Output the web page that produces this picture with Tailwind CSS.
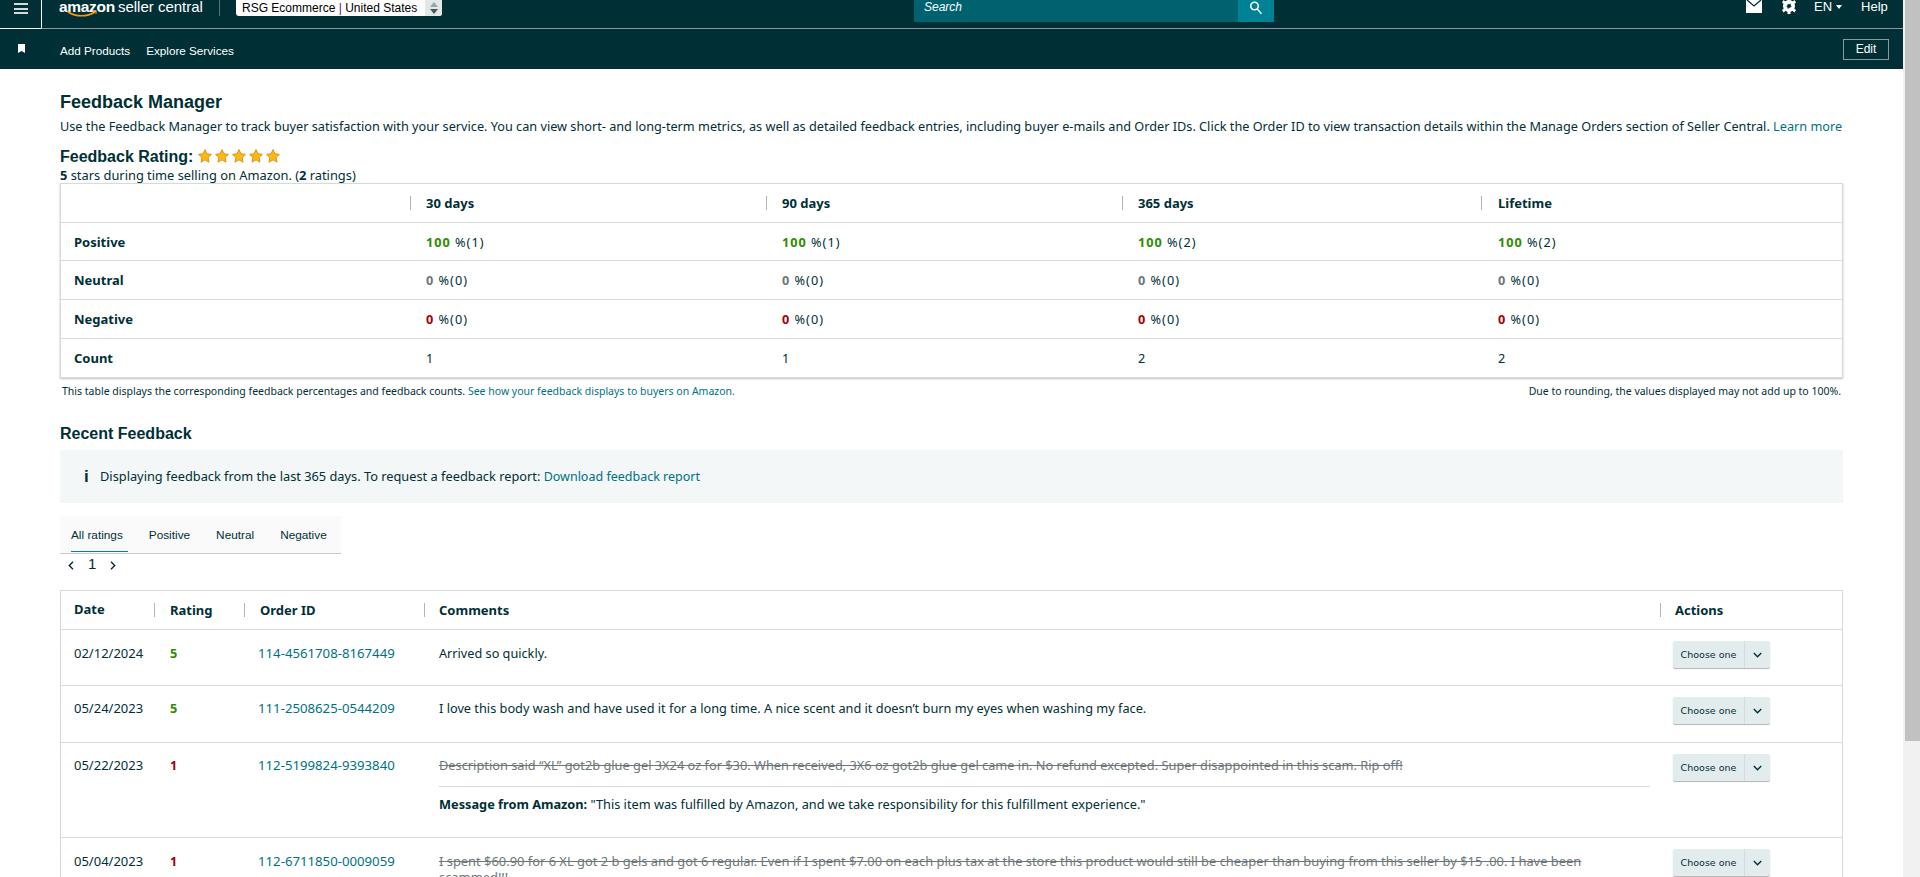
<!DOCTYPE html>
<html lang="en">
<head>
    <meta charset="UTF-8">
    <title>Feedback Manager</title>
    <script src="https://cdn.jsdelivr.net/npm/@tailwindcss/browser@4"></script>
</head>
<body class="bg-white">
<div class="flex h-[877px] overflow-hidden font-['Noto_Sans',sans-serif] text-[12.7px] text-[#002f36]">
    <div class="w-[1903px] shrink-0">

        <!-- Top bar -->
        <div class="flex h-[29px] items-start border-b border-[#8a9a9c] bg-[#002f36] font-['Liberation_Sans',sans-serif] text-white">
            <div class="flex h-[29px] w-[42px] flex-col items-center gap-[2.5px] rounded-br-[2px] border-r border-b border-white pt-[3px]">
                <div class="h-[2px] w-[14px] bg-[#d5dbdb]"></div>
                <div class="h-[2px] w-[14px] bg-[#d5dbdb]"></div>
                <div class="h-[2px] w-[14px] bg-[#d5dbdb]"></div>
            </div>
            <div class="relative ml-[17px] flex w-[160px] items-baseline gap-[3px] leading-[13px]">
                <span class="text-[15.5px] font-bold tracking-[-0.3px]">amazon</span>
                <span class="text-[15px]">seller central</span>
                <svg class="absolute left-[8px] top-[11px]" width="30" height="6" viewBox="0 0 30 6" fill="none"><path d="M1 1c8 5 19 5 27 0" stroke="#f90" stroke-width="1.5"/><path d="M25 0h4v3" stroke="#f90" stroke-width="1"/></svg>
            </div>
            <div class="h-[16px] w-px bg-[#5f7376]"></div>
            <div class="ml-[16px] flex h-[16px] w-[206px] items-center justify-between rounded-b-[3px] bg-white pl-[6px] text-[12px] text-black">
                <span class="-mt-[1px] whitespace-nowrap"><span class="font-medium">RSG Ecommerce</span> <span class="text-[#5b0f8a]">|</span> United States</span>
                <div class="flex h-full w-[17px] flex-col items-center justify-center gap-[2px] rounded-br-[3px] bg-[#e4e7e7]">
                    <div class="h-0 w-0 border-x-[4px] border-b-[5px] border-x-transparent border-b-[#9aa5a6]"></div>
                    <div class="h-0 w-0 border-x-[4px] border-t-[5px] border-x-transparent border-t-[#4a5a5c]"></div>
                </div>
            </div>
            <div class="ml-[472px] flex h-[22px] w-[360px] justify-between bg-[#00626f]">
                <span class="pl-[10px] text-[12px] italic leading-[14px]">Search</span>
                <div class="flex w-[36px] justify-center bg-[#008296] pt-[1px]">
                    <svg width="14" height="14" viewBox="0 0 14 14" fill="none" stroke="white" stroke-width="1.5"><circle cx="5.5" cy="5" r="3.8"/><path d="M8.3 8l4.2 4.7"/></svg>
                </div>
            </div>
            <div class="ml-[472px] flex h-[14px] w-[16px]">
                <svg width="16" height="13" viewBox="0 0 16 13"><path d="M0 0h16v13H0z" fill="white"/><path d="M1 0l7 6 7-6" fill="none" stroke="#002f36" stroke-width="1.3"/></svg>
            </div>
            <svg class="ml-[19px]" width="16" height="14" viewBox="0 0 16 14"><circle cx="8" cy="6" r="4.5" fill="none" stroke="white" stroke-width="3"/><path d="M6.5 -1h3v15h-3zM1 2.5l1.5-2.500 12.500 10-1.500 2.500zM15 2.500l-1.500-2.500-12.500 10 1.500 2.500z" fill="white"/><circle cx="8" cy="6" r="2" fill="#002f36"/></svg>
            <span class="ml-[17px] text-[13px] leading-[13px]">EN</span>
            <div class="ml-[4px] mt-[5px] h-0 w-0 border-x-[3.5px] border-t-[4px] border-x-transparent border-t-white"></div>
            <span class="ml-[19px] text-[13px] leading-[13px]">Help</span>
        </div>

        <!-- Second bar -->
        <div class="flex h-[40px] items-center bg-[#002f36] font-['Liberation_Sans',sans-serif] text-[11.7px] text-white">
            <svg class="ml-[18px] mb-[2px]" width="7" height="9" viewBox="0 0 7 9"><path d="M0 0h7v9L3.500 7 0 9z" fill="white"/></svg>
            <span class="ml-[35px] mt-[3px]">Add Products</span>
            <span class="ml-[16px] mt-[3px]">Explore Services</span>
            <div class="ml-auto mr-[14px] flex h-[21px] w-[46px] items-center justify-center border border-[#8a9a9c] text-[12px]">Edit</div>
        </div>

        <!-- Feedback summary -->
        <div class="w-[1783px] ml-[60px]">
            <h1 class="mt-[21px] font-['Liberation_Sans',sans-serif] text-[18px] font-bold leading-[24px]">Feedback Manager</h1>
            <p class="mt-[3px] whitespace-nowrap leading-[18px]">Use the Feedback Manager to track buyer satisfaction with your service. You can view short- and long-term metrics, as well as detailed feedback entries, including buyer e-mails and Order IDs. Click the Order ID to view transaction details within the Manage Orders section of Seller Central. <span class="text-[#007185]">Learn more</span></p>
            <div class="mt-[12px] flex h-[20px] items-center">
                <h2 class="font-['Liberation_Sans',sans-serif] text-[16px] font-bold">Feedback Rating:</h2>
                <div class="ml-[5px] mb-[3px] flex gap-[3px]">
                    <svg width="14" height="14" viewBox="0 0 24 24"><path d="M12 1l3.400 7.300 7.600.9-5.600 5.400 1.500 8L12 18.600 5.100 22.600l1.500-8L1 9.200l7.600-.9z" fill="#fdb913" stroke="#d98a0b" stroke-width="1.500"/></svg>
                    <svg width="14" height="14" viewBox="0 0 24 24"><path d="M12 1l3.400 7.300 7.600.9-5.600 5.400 1.500 8L12 18.600 5.100 22.600l1.500-8L1 9.200l7.600-.9z" fill="#fdb913" stroke="#d98a0b" stroke-width="1.500"/></svg>
                    <svg width="14" height="14" viewBox="0 0 24 24"><path d="M12 1l3.400 7.300 7.600.9-5.600 5.400 1.500 8L12 18.600 5.100 22.600l1.500-8L1 9.200l7.600-.9z" fill="#fdb913" stroke="#d98a0b" stroke-width="1.500"/></svg>
                    <svg width="14" height="14" viewBox="0 0 24 24"><path d="M12 1l3.400 7.300 7.600.9-5.600 5.400 1.500 8L12 18.600 5.100 22.600l1.500-8L1 9.200l7.600-.9z" fill="#fdb913" stroke="#d98a0b" stroke-width="1.500"/></svg>
                    <svg width="14" height="14" viewBox="0 0 24 24"><path d="M12 1l3.400 7.300 7.600.9-5.600 5.400 1.500 8L12 18.600 5.100 22.600l1.500-8L1 9.200l7.600-.9z" fill="#fdb913" stroke="#d98a0b" stroke-width="1.500"/></svg>
                </div>
            </div>
            <p class="text-[12.85px] leading-[16px]"><b>5</b> stars during time selling on Amazon. (<b>2</b> ratings)</p>

            <!-- Metrics table -->
            <div class="border border-[#d5dbdb] shadow-[0_1px_2px_rgba(0,0,0,0.25)]">
                <div class="grid h-[39px] grid-cols-[349px_356px_356px_359px_1fr] items-center border-b border-[#d5dbdb] text-[13px] font-bold">
                    <div></div>
                    <div class="border-l border-[#aab7b8] pl-[15px] leading-[14px]">30 days</div>
                    <div class="border-l border-[#aab7b8] pl-[15px] leading-[14px]">90 days</div>
                    <div class="border-l border-[#aab7b8] pl-[15px] leading-[14px]">365 days</div>
                    <div class="border-l border-[#aab7b8] pl-[16px] leading-[14px]">Lifetime</div>
                </div>
                <div class="grid h-[38px] grid-cols-[349px_356px_356px_359px_1fr] items-center border-b border-[#d5dbdb] pt-[2px] tracking-[1px]">
                    <div class="pl-[13px] text-[13px] font-bold tracking-normal">Positive</div>
                    <div class="pl-[16px]"><b class="text-[#2e8b00]">100</b> %(1)</div>
                    <div class="pl-[16px]"><b class="text-[#2e8b00]">100</b> %(1)</div>
                    <div class="pl-[16px]"><b class="text-[#2e8b00]">100</b> %(2)</div>
                    <div class="pl-[17px]"><b class="text-[#2e8b00]">100</b> %(2)</div>
                </div>
                <div class="grid h-[39px] grid-cols-[349px_356px_356px_359px_1fr] items-center border-b border-[#d5dbdb] pt-[2px] tracking-[1px]">
                    <div class="pl-[13px] text-[13px] font-bold tracking-normal">Neutral</div>
                    <div class="pl-[16px]"><b class="text-[#6c7778]">0</b> %(0)</div>
                    <div class="pl-[16px]"><b class="text-[#6c7778]">0</b> %(0)</div>
                    <div class="pl-[16px]"><b class="text-[#6c7778]">0</b> %(0)</div>
                    <div class="pl-[17px]"><b class="text-[#6c7778]">0</b> %(0)</div>
                </div>
                <div class="grid h-[39px] grid-cols-[349px_356px_356px_359px_1fr] items-center border-b border-[#d5dbdb] pt-[2px] tracking-[1px]">
                    <div class="pl-[13px] text-[13px] font-bold tracking-normal">Negative</div>
                    <div class="pl-[16px]"><b class="text-[#a50000]">0</b> %(0)</div>
                    <div class="pl-[16px]"><b class="text-[#a50000]">0</b> %(0)</div>
                    <div class="pl-[16px]"><b class="text-[#a50000]">0</b> %(0)</div>
                    <div class="pl-[17px]"><b class="text-[#a50000]">0</b> %(0)</div>
                </div>
                <div class="grid h-[38px] grid-cols-[349px_356px_356px_359px_1fr] items-center pt-[2px]">
                    <div class="pl-[13px] text-[13px] font-bold">Count</div>
                    <div class="pl-[16px]">1</div>
                    <div class="pl-[16px]">1</div>
                    <div class="pl-[16px]">2</div>
                    <div class="pl-[17px]">2</div>
                </div>
            </div>
            <div class="mt-[6px] flex justify-between px-[2px] text-[10.5px] leading-[14px]">
                <p>This table displays the corresponding feedback percentages and feedback counts. <span class="text-[#007185]">See how your feedback displays to buyers on Amazon.</span></p>
                <p>Due to rounding, the values displayed may not add up to 100%.</p>
            </div>

            <!-- Recent feedback -->
            <h2 class="mt-[25px] font-['Liberation_Sans',sans-serif] text-[16px] font-bold leading-[22px]">Recent Feedback</h2>
            <div class="mt-[5px] flex h-[53px] items-center bg-[#f3f7f7] pl-[24px]">
                <span class="w-[16px] font-['Liberation_Sans',sans-serif] text-[17px] font-bold">i</span>
                <span class="text-[12.8px]">Displaying feedback from the last 365 days. To request a feedback report: <span class="text-[12.5px] text-[#007185]">Download feedback report</span></span>
            </div>

            <div class="mt-[13px] flex h-[38px] w-[281px] items-start gap-[26px] border-b border-[#c4cccc] bg-[#fafafa] pl-[11px] font-['Liberation_Sans',sans-serif] text-[11.8px]">
                <span class="h-[36px] border-b border-[#008296] pr-[5px] pt-[12px] leading-[14px]">All ratings</span>
                <span class="-ml-[5px] pt-[12px] leading-[14px]">Positive</span>
                <span class="pt-[12px] leading-[14px]">Neutral</span>
                <span class="pt-[12px] leading-[14px]">Negative</span>
            </div>
            <div class="flex h-[22px] items-center pl-[8px] font-['Liberation_Sans',sans-serif]">
                <svg width="6" height="9" viewBox="0 0 6 9" fill="none" stroke="#002f36" stroke-width="1.400"><path d="M5 .8L1.300 4.500 5 8.200"/></svg>
                <span class="ml-[14px] mb-[2px] text-[15px] font-medium">1</span>
                <svg class="ml-[14px]" width="6" height="9" viewBox="0 0 6 9" fill="none" stroke="#002f36" stroke-width="1.400"><path d="M1 .8l3.700 3.700L1 8.200"/></svg>
            </div>

            <!-- Feedback table -->
            <div class="mt-[14px] border-x border-t border-[#d5dbdb]">
                <div class="grid h-[39px] grid-cols-[93px_90px_180px_1236px_1fr] items-center border-b border-[#d5dbdb] text-[13px] font-bold">
                    <div class="pl-[13px]">Date</div>
                    <div class="border-l border-[#aab7b8] pl-[15px] leading-[14px]">Rating</div>
                    <div class="border-l border-[#aab7b8] pl-[15px] leading-[14px]">Order ID</div>
                    <div class="border-l border-[#aab7b8] pl-[14px] leading-[14px]">Comments</div>
                    <div class="border-l border-[#aab7b8] pl-[14px] leading-[14px]">Actions</div>
                </div>
                <div class="grid h-[56px] grid-cols-[93px_90px_180px_1236px_1fr] items-start border-b border-[#d5dbdb] pt-[15px] leading-[16px]">
                    <div class="pl-[13px] text-[13px]">02/12/2024</div>
                    <div class="pl-[16px] font-bold text-[#2e8b00]">5</div>
                    <div class="pl-[14px] text-[13.2px] text-[#007185]">114-4561708-8167449</div>
                    <div class="pl-[15px]">Arrived so quickly.</div>
                    <div class="-mt-[4px] pl-[13px]">
                        <div class="flex h-[27px] w-[97px] rounded-[2px] bg-[#e3ecec] shadow-[0_1px_1px_rgba(0,0,0,0.3)]">
                            <div class="flex w-[72px] items-center justify-center border-r border-[#d5dbdb] font-['DejaVu_Sans',sans-serif] text-[9.5px]">Choose one</div>
                            <div class="flex flex-1 items-center justify-center"><svg width="9" height="6" viewBox="0 0 9 6" fill="none" stroke="#002f36" stroke-width="1.400"><path d="M.8 1l3.700 3.700L8.200 1"/></svg></div>
                        </div>
                    </div>
                </div>
                <div class="grid h-[57px] grid-cols-[93px_90px_180px_1236px_1fr] items-start border-b border-[#d5dbdb] pt-[14px] leading-[16px]">
                    <div class="pl-[13px] text-[13px]">05/24/2023</div>
                    <div class="pl-[16px] font-bold text-[#2e8b00]">5</div>
                    <div class="pl-[14px] text-[13.2px] text-[#007185]">111-2508625-0544209</div>
                    <div class="pl-[15px] text-[12.75px]">I love this body wash and have used it for a long time. A nice scent and it doesn’t burn my eyes when washing my face.</div>
                    <div class="-mt-[3px] pl-[13px]">
                        <div class="flex h-[27px] w-[97px] rounded-[2px] bg-[#e3ecec] shadow-[0_1px_1px_rgba(0,0,0,0.3)]">
                            <div class="flex w-[72px] items-center justify-center border-r border-[#d5dbdb] font-['DejaVu_Sans',sans-serif] text-[9.5px]">Choose one</div>
                            <div class="flex flex-1 items-center justify-center"><svg width="9" height="6" viewBox="0 0 9 6" fill="none" stroke="#002f36" stroke-width="1.400"><path d="M.8 1l3.700 3.700L8.200 1"/></svg></div>
                        </div>
                    </div>
                </div>
                <div class="grid h-[95px] grid-cols-[93px_90px_180px_1236px_1fr] items-start border-b border-[#d5dbdb] pt-[14px] leading-[16px]">
                    <div class="pl-[13px] text-[13px]">05/22/2023</div>
                    <div class="pl-[16px] font-bold text-[#a50000]">1</div>
                    <div class="pl-[14px] text-[13.2px] text-[#007185]">112-5199824-9393840</div>
                    <div class="pl-[15px]">
                        <p class="text-[12.8px] text-[#6c7778] line-through">Description said “XL” got2b glue gel 3X24 oz for $30. When received, 3X6 oz got2b glue gel came in. No refund excepted. Super disappointed in this scam. Rip off!</p>
                        <div class="mt-[13px] h-px w-[1211px] bg-[#d5dbdb]"></div>
                        <p class="mt-[9px] text-[12.75px]"><b>Message from Amazon:</b> "This item was fulfilled by Amazon, and we take responsibility for this fulfillment experience."</p>
                    </div>
                    <div class="-mt-[3px] pl-[13px]">
                        <div class="flex h-[27px] w-[97px] rounded-[2px] bg-[#e3ecec] shadow-[0_1px_1px_rgba(0,0,0,0.3)]">
                            <div class="flex w-[72px] items-center justify-center border-r border-[#d5dbdb] font-['DejaVu_Sans',sans-serif] text-[9.5px]">Choose one</div>
                            <div class="flex flex-1 items-center justify-center"><svg width="9" height="6" viewBox="0 0 9 6" fill="none" stroke="#002f36" stroke-width="1.400"><path d="M.8 1l3.700 3.700L8.200 1"/></svg></div>
                        </div>
                    </div>
                </div>
                <div class="grid grid-cols-[93px_90px_180px_1236px_1fr] items-start pt-[15px] leading-[16px]">
                    <div class="pl-[13px] text-[13px]">05/04/2023</div>
                    <div class="pl-[16px] font-bold text-[#a50000]">1</div>
                    <div class="pl-[14px] text-[13.2px] text-[#007185]">112-6711850-0009059</div>
                    <div class="pl-[15px] text-[12.9px] text-[#6c7778] line-through">I spent $60.90 for 6 XL got 2 b gels and got 6 regular. Even if I spent $7.00 on each plus tax at the store this product would still be cheaper than buying from this seller by $15 .00. I have been<br>scammed!!!</div>
                    <div class="-mt-[4px] pl-[13px]">
                        <div class="flex h-[27px] w-[97px] rounded-[2px] bg-[#e3ecec] shadow-[0_1px_1px_rgba(0,0,0,0.3)]">
                            <div class="flex w-[72px] items-center justify-center border-r border-[#d5dbdb] font-['DejaVu_Sans',sans-serif] text-[9.5px]">Choose one</div>
                            <div class="flex flex-1 items-center justify-center"><svg width="9" height="6" viewBox="0 0 9 6" fill="none" stroke="#002f36" stroke-width="1.400"><path d="M.8 1l3.700 3.700L8.200 1"/></svg></div>
                        </div>
                    </div>
                </div>
            </div>
        </div>
    </div>

    <!-- Scrollbar -->
    <div class="w-[17px] bg-[#f1f1f1] pl-[2px]">
        <div class="h-[741px] bg-[#c1c1c1]"></div>
    </div>
</div>
</body>
</html>
